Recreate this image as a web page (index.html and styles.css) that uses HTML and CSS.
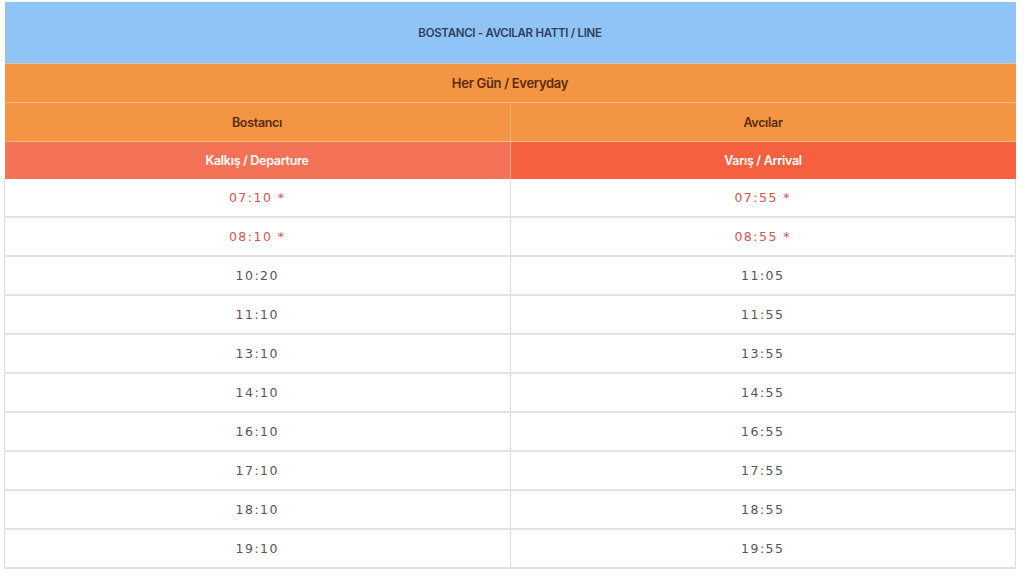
FILE: index.html
```html
<!DOCTYPE html>
<html lang="tr">
<head>
  <meta charset="UTF-8" />
  <meta name="viewport" content="width=device-width, initial-scale=1.0"/>
  <title>Bostancı - Avcılar Hattı</title>
  <link rel="stylesheet" href="styles.css">
</head>
<body>
  <table class="timetable">
    <thead>
      <tr class="line-row">
        <th colspan="2">BOSTANCI - AVCILAR HATTI / LINE</th>
      </tr>
      <tr class="day-row">
        <th colspan="2">Her Gün / Everyday</th>
      </tr>
      <tr class="stop-row">
        <th>Bostancı</th><th>Avcılar</th>
      </tr>
      <tr class="dir-row">
        <th class="dep">Kalkış / Departure</th><th class="arr">Varış / Arrival</th>
      </tr>
    </thead>
    <tbody>
      <tr class="special"><td>07:10 *</td><td>07:55 *</td></tr>
      <tr class="special"><td>08:10 *</td><td>08:55 *</td></tr>
      <tr><td>10:20</td><td>11:05</td></tr>
      <tr><td>11:10</td><td>11:55</td></tr>
      <tr><td>13:10</td><td>13:55</td></tr>
      <tr><td>14:10</td><td>14:55</td></tr>
      <tr><td>16:10</td><td>16:55</td></tr>
      <tr><td>17:10</td><td>17:55</td></tr>
      <tr><td>18:10</td><td>18:55</td></tr>
      <tr><td>19:10</td><td>19:55</td></tr>
    </tbody>
  </table>
</body>
</html>
```

FILE: styles.css
```css
body {
  margin: 2px 8px 0 4px;
  background: #fff;
  font-family: "Inter", "Noto Sans", sans-serif;
}
.timetable {
  width: 1012px;
  border-collapse: collapse;
  table-layout: fixed;
}
.timetable th {
  font-weight: 600;
  font-size: 12.5px;
  text-align: center;
  padding: 0;
  letter-spacing: -0.3px;
}
.line-row th {
  background: #90c3f6;
  color: #2f3f5c;
  height: 61px;
  font-size: 11.5px;
  border-bottom: 1px solid #d9c7b0;
}
.day-row th {
  background: #f49543;
  color: #5b2a0c;
  height: 38px;
  font-size: 13px;
  border-bottom: 1px solid #f8bb86;
}
.stop-row th {
  background: #f49543;
  color: #5b2a0c;
  height: 38px;
  border-bottom: 1px solid #f8bb86;
}
.stop-row th:first-child {
  border-right: 1px solid #f8b47a;
}
.dir-row th {
  color: #fff;
  height: 37px;
}
.dir-row .dep {
  background: #f47357;
  border-right: 1px solid #f8a898;
}
.dir-row .arr {
  background: #f5603e;
}
.timetable td {
  height: 37px;
  padding: 0;
  text-align: center;
  font-family: "DejaVu Sans", sans-serif;
  font-size: 12.5px;
  letter-spacing: 1.5px;
  color: #555;
  border: 1px solid #dcdcdc;
  border-top: 0;
  border-bottom: 2px solid #e2e2e2;
}
.special td {
  color: #d9534f;
}
```
